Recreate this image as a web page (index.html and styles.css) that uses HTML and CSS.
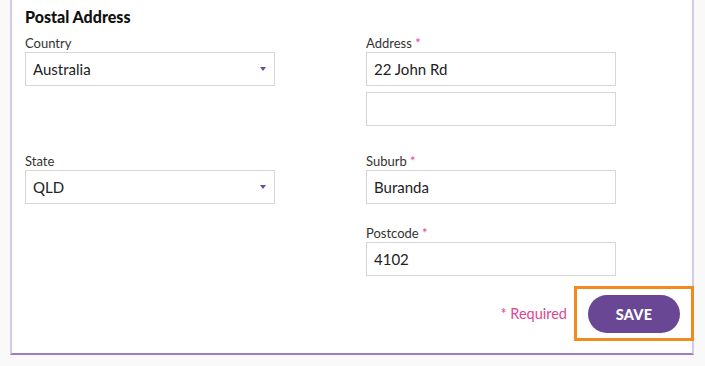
FILE: index.html
```html
<!doctype html>
<html>
<head>
	<title>Postal Address</title>
	<meta charset="utf-8">
	<link rel="stylesheet" href="styles.css">
</head>
<body>
	<div class="wrapper">
		<form class="card" id="postal-address">
			<h2>Postal Address</h2>
			<div class="fields">
				<div class="field">
					<label for="country">Country</label>
					<div class="select-box">
						<select id="country">
							<option>Australia</option>
						</select>
					</div>
				</div>
				<div class="field field-multi">
					<label for="address1">Address <span class="req">*</span></label>
					<input type="text" id="address1" value="22 John Rd">
					<input type="text" id="address2" value="">
				</div>
				<div class="field">
					<label for="state">State</label>
					<div class="select-box">
						<select id="state">
							<option>QLD</option>
						</select>
					</div>
				</div>
				<div class="field">
					<label for="suburb">Suburb <span class="req">*</span></label>
					<input type="text" id="suburb" value="Buranda">
				</div>
				<div class="field field-right">
					<label for="postcode">Postcode <span class="req">*</span></label>
					<input type="text" id="postcode" value="4102">
				</div>
			</div>
			<div class="actions">
				<span class="required">* Required</span>
				<span class="highlight">
					<button type="submit" id="save">SAVE</button>
				</span>
			</div>
		</form>
	</div>
</body>
</html>
```

FILE: styles.css
```css
	html, body {
		margin: 0;
		background: #f9f9f9;
		font-family: Lato, "Open Sans", sans-serif;
		color: #222;
	}
	.wrapper {
		padding: 0 11px 11px 10px;
	}
	.card {
		background: #fff;
		border-left: 2px solid #d6c8e8;
		border-right: 2px solid #d6c8e8;
		border-bottom: 2px solid #9b7cc6;
		padding: 7px 0 12px 13px;
	}
	h2 {
		margin: 0 0 8px;
		font-size: 16px;
		line-height: 20px;
		font-weight: 900;
		color: #111;
	}
	.fields {
		display: grid;
		grid-template-columns: 250px 250px;
		column-gap: 91px;
		row-gap: 21px;
	}
	.field {
		display: flex;
		flex-direction: column;
	}
	.field-multi {
		padding-bottom: 6px;
	}
	.field-multi input + input {
		margin-top: 6px;
	}
	.field-right {
		grid-column: 2;
	}
	label {
		font-size: 13px;
		line-height: 16px;
		color: #333;
		margin-bottom: 1px;
	}
	.req {
		color: #e0449a;
	}
	input[type="text"], select {
		box-sizing: border-box;
		width: 250px;
		height: 34px;
		margin: 0;
		padding: 0 7px;
		border: 1px solid #d6d6d6;
		border-radius: 0;
		background: #fff;
		font-family: Lato, "Open Sans", sans-serif;
		font-size: 15px;
		color: #222;
		outline: none;
	}
	select {
		-webkit-appearance: none;
		appearance: none;
	}
	.select-box {
		position: relative;
	}
	.select-box::after {
		content: "";
		position: absolute;
		right: 9px;
		top: 15px;
		border-left: 3px solid transparent;
		border-right: 3px solid transparent;
		border-top: 4px solid #6b4c9a;
	}
	.actions {
		display: flex;
		justify-content: flex-end;
		align-items: center;
		gap: 7px;
		margin-top: 10px;
	}
	.required {
		font-size: 14.5px;
		color: #dc4695;
	}
	.highlight {
		display: block;
		border: 3px solid #f28b1e;
		padding: 6px 11px 5px 11px;
		margin-right: -2px;
	}
	#save {
		display: block;
		width: 92px;
		height: 38px;
		border: none;
		border-radius: 19px;
		background: #6a4795;
		color: #fff;
		font-family: Lato, "Open Sans", sans-serif;
		font-size: 14.5px;
		font-weight: 900;
		letter-spacing: 0.2px;
	}
```
